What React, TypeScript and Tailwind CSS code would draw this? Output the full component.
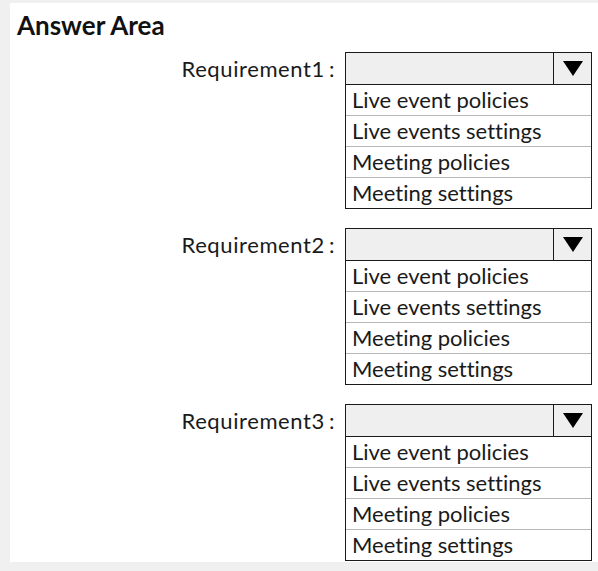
import React from "react";

const options = [
  "Live event policies",
  "Live events settings",
  "Meeting policies",
  "Meeting settings",
];

function Group({ label }: { label: string }) {
  return (
    <div className="flex items-start">
      <div className="w-[325px] h-[33px] leading-[33px] text-right text-[22px] tracking-[0.6px] text-[#1a1a1a]">
        {label}
        <span className="ml-[4px]">:</span>
      </div>
      <div className="ml-[10px] w-[247px] border border-[#1a1a1a]">
        <div className="flex h-[32px] bg-[#efefef] border-b border-[#1a1a1a]">
          <div className="flex-1" />
          <div className="w-[38px] border-l border-[#1a1a1a] flex items-center justify-center">
            <svg width="20" height="15" viewBox="0 0 20 15">
              <polygon points="0,0 20,0 10,15" fill="#000" />
            </svg>
          </div>
        </div>
        {options.map((o, i) => (
          <div
            key={o}
            className={
              i > 0
                ? "h-[31px] leading-[30px] border-t border-[#b8b8b8] pl-[6px] text-[22px] text-[#1a1a1a] bg-white"
                : "h-[30px] leading-[30px] pl-[6px] text-[22px] text-[#1a1a1a] bg-white"
            }
          >
            {o}
          </div>
        ))}
      </div>
    </div>
  );
}

export default function App() {
  return (
    <div
      className="w-[598px] h-[571px] bg-[#f0f0f0] pt-[3px] pl-[10px] [font-variant-ligatures:none]"
      style={{ fontFamily: "Lato, 'Open Sans', sans-serif" }}
    >
      <div className="w-[588px] h-[559px] bg-white pl-[7px] pt-[8px]">
        <div className="text-[26px] leading-[28px] font-bold text-[#111]">Answer Area</div>
        <div className="mt-[13px] flex flex-col gap-[19px] -ml-[7px]">
          <Group label="Requirement1" />
          <Group label="Requirement2" />
          <Group label="Requirement3" />
        </div>
      </div>
    </div>
  );
}
